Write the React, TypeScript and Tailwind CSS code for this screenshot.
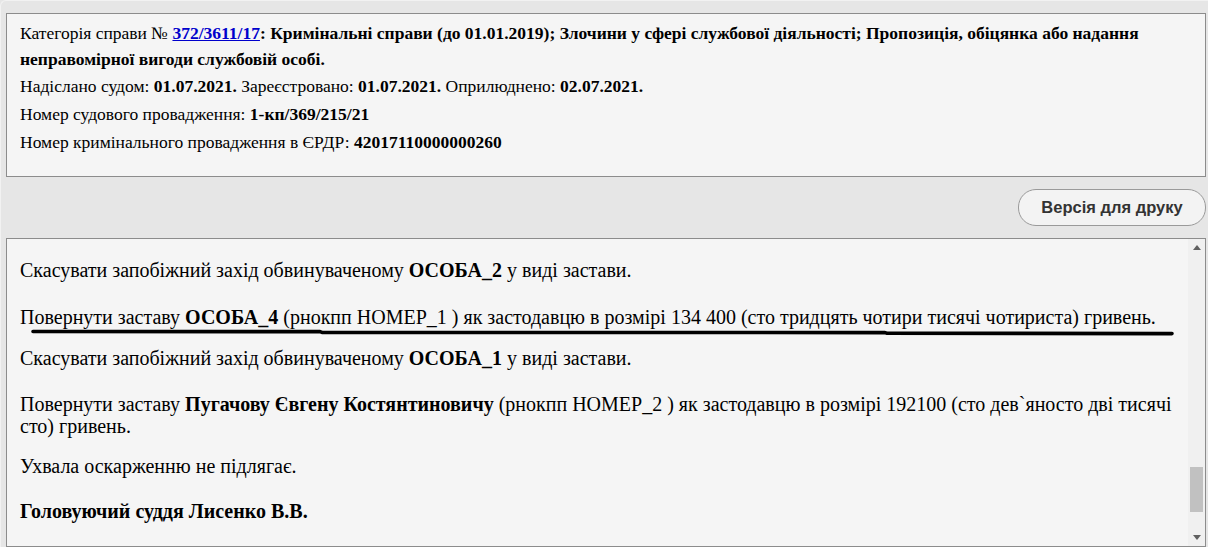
import React from "react";

export default function App() {
  return (
    <div className="min-h-[547px] h-[547px] overflow-hidden bg-[#e6e6e6] text-black font-[family-name:'Liberation_Serif',serif]">
      <div className="h-full rounded-tl-[6px] border-l border-t border-[#f2f2f2] pl-[5px] pr-[2px] pt-[12px]">
        {/* Top info panel */}
        <div className="border border-[#8c8c8c] bg-[#f5f5f5] pl-[13px] pr-[10px] pt-[6px] pb-[21px] text-[17.5px] leading-[26px]">
          <div>
            Категорія справи №{" "}
            <a className="font-bold text-[#0000cc] underline" href="#">
              372/3611/17
            </a>
            <b>
              : Кримінальні справи (до 01.01.2019); Злочини у сфері службової діяльності; Пропозиція, обіцянка або надання
              неправомірної вигоди службовій особі.
            </b>
          </div>
          <div className="mt-[1px]">
            Надіслано судом: <b>01.07.2021.</b> Зареєстровано: <b>01.07.2021.</b> Оприлюднено: <b>02.07.2021.</b>
          </div>
          <div className="mt-[2px]">
            Номер судового провадження: <b>1-кп/369/215/21</b>
          </div>
          <div className="mt-[2px]">
            Номер кримінального провадження в ЄРДР: <b>42017110000000260</b>
          </div>
        </div>

        {/* Print button row */}
        <div className="flex justify-end py-[12px]">
          <button className="h-[37px] w-[188px] rounded-[18px] border border-[#9a9a9a] bg-[#f3f3f3] font-[family-name:'Liberation_Sans',Arial,sans-serif] text-[16.5px] font-bold text-[#333]">
            Версія для друку
          </button>
        </div>

        {/* Document panel */}
        <div className="flex h-[309px] border border-[#8c8c8c] bg-[#f5f5f5]">
          <div className="flex-1 overflow-hidden pl-[13px] pr-[6px] pt-[20px] text-[20px] leading-[22px]">
            <p>
              Скасувати запобіжний захід обвинуваченому <b>ОСОБА_2</b> у виді застави.
            </p>
            <p className="relative mt-[25px]">
              Повернути заставу <b>ОСОБА_4</b> (рнокпп НОМЕР_1 ) як застодавцю в розмірі 134 400 (сто тридцять чотири тисячі
              чотириста) гривень.
              <svg
                className="absolute left-[10px] top-[22px]"
                width="1160"
                height="10"
                viewBox="0 0 1160 10"
              >
                <path
                  d="M3 3.5 L290 3.6 L292 4.4 L855 4.6 L857 5.2 L1142 5.6"
                  fill="none"
                  stroke="#000"
                  strokeWidth="3.6"
                  strokeLinecap="round"
                  strokeLinejoin="round"
                />
              </svg>
            </p>
            <p className="mt-[19px]">
              Скасувати запобіжний захід обвинуваченому <b>ОСОБА_1</b> у виді застави.
            </p>
            <p className="mt-[24px]">
              Повернути заставу <b>Пугачову Євгену Костянтиновичу</b> (рнокпп НОМЕР_2 ) як застодавцю в розмірі 192100 (сто
              дев`яносто дві тисячі сто) гривень.
            </p>
            <p className="mt-[18px]">Ухвала оскарженню не підлягає.</p>
            <p className="mt-[23px]">
              <b>Головуючий суддя Лисенко В.В.</b>
            </p>
          </div>
          {/* Scrollbar */}
          <div className="flex w-[17px] flex-col bg-[#f0f0f0]">
            <div className="flex h-[17px] items-center justify-center">
              <svg width="8" height="5" viewBox="0 0 8 5">
                <path d="M0 5 L4 0 L8 5 Z" fill="#606060" />
              </svg>
            </div>
            <div className="flex-1 px-[2px]">
              <div className="mt-[211px] h-[45px] bg-[#c1c1c1]" />
            </div>
            <div className="flex h-[17px] items-center justify-center">
              <svg width="8" height="5" viewBox="0 0 8 5">
                <path d="M0 0 L4 5 L8 0 Z" fill="#606060" />
              </svg>
            </div>
          </div>
        </div>
      </div>
    </div>
  );
}
